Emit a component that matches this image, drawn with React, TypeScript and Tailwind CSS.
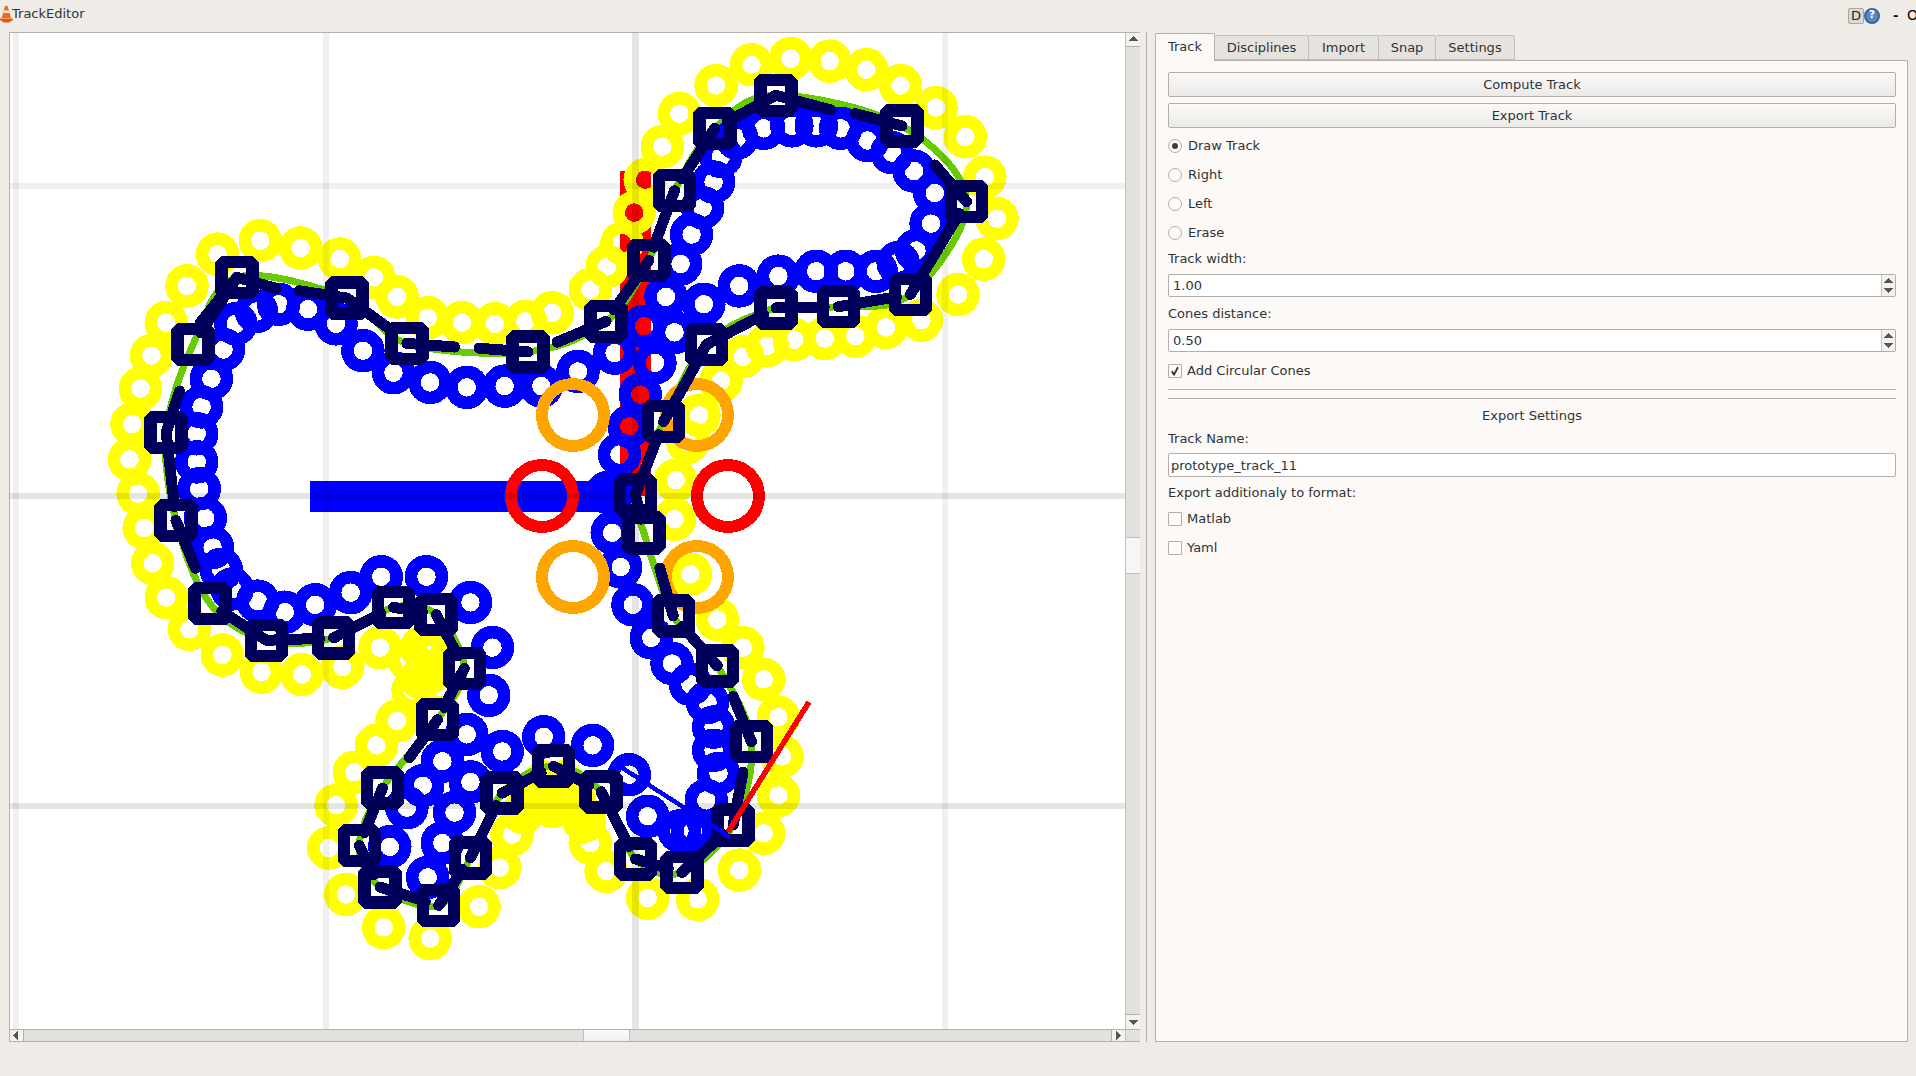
const S = 1916 / 1568;

type P = [number, number];

const GRID_X = [
  { x: 13, w: 6, o: 0.06 },
  { x: 323, w: 6, o: 0.06 },
  { x: 632, w: 7, o: 0.1 },
  { x: 942, w: 6, o: 0.06 },
];
const GRID_Y = [
  { y: 183, h: 6, o: 0.06 },
  { y: 493, h: 6, o: 0.1 },
  { y: 803, h: 6, o: 0.1 },
];

const YELLOW: P[] = [
  [586, 70], [615, 53], [647, 48], [679, 50], [709, 57], [737, 70], [766, 88], [790, 112], [806, 145], [816, 179],
  [805, 212], [784, 241], [754, 262], [725, 268], [700, 275], [675, 277], [650, 278], [628, 283], [608, 292], [590, 312],
  [572, 340], [563, 362], [553, 393], [552, 425], [565, 470], [587, 507], [608, 530], [625, 556], [637, 587], [640, 619],
  [637, 651], [625, 682], [605, 712], [571, 736], [530, 735], [496, 713], [483, 690], [478, 672], [470, 655], [455, 650],
  [440, 650], [428, 665], [419, 683], [409, 710], [392, 742], [352, 768], [314, 759], [283, 732], [269, 694], [275, 659],
  [290, 632], [308, 610], [325, 590], [338, 565], [352, 550], [345, 530], [311, 530], [280, 546], [247, 552], [214, 550],
  [182, 536], [155, 515], [136, 489], [125, 461], [118, 432], [113, 404], [106, 376], [108, 347], [115, 318], [124, 291],
  [136, 264], [153, 234], [178, 208], [213, 197], [246, 203], [278, 212], [306, 227], [325, 243], [350, 260], [378, 264],
  [405, 265], [430, 263], [452, 256], [483, 237], [497, 218], [509, 199], [519, 174], [528, 147], [542, 120], [556, 93],
  [335, 540], [355, 535], [345, 555], [360, 562], [445, 640], [460, 640], [472, 662], [435, 655], [452, 660],
];

const BLUE: P[] = [
  [584, 149], [590, 128], [603, 113], [625, 105], [648, 103], [668, 103], [688, 105], [710, 115], [730, 125], [748, 140],
  [765, 158], [762, 183], [750, 205], [735, 215], [717, 222], [692, 222], [668, 222], [637, 226], [605, 234], [576, 249],
  [552, 272], [536, 297], [527, 267], [524, 323], [515, 349], [507, 372], [497, 403], [501, 436], [508, 464], [518, 495],
  [533, 522], [550, 543], [565, 560], [579, 575], [584, 595], [584, 614], [588, 633], [578, 655], [567, 680], [556, 680],
  [530, 668], [515, 634], [485, 610], [445, 603], [411, 615], [382, 601], [362, 623], [346, 643], [385, 640], [372, 665],
  [333, 661], [319, 693], [362, 690], [350, 718], [400, 569], [403, 530], [385, 493], [349, 472], [312, 472], [287, 485],
  [258, 495], [233, 501], [211, 492], [190, 482], [181, 466], [174, 448], [168, 424], [163, 400], [161, 378], [161, 355], [165, 333],
  [173, 310], [183, 286], [193, 265], [210, 255], [228, 249], [252, 253], [275, 265], [297, 287], [322, 305], [352, 313], [382, 317],
  [413, 316], [443, 316], [473, 304], [503, 289], [545, 243], [557, 216], [566, 192], [575, 170],
];

const SQUARES: P[] = [
  [194, 227], [284, 244], [333, 281], [432, 288], [496, 263], [531, 213], [552, 156], [585, 105], [635, 78], [738, 103],
  [791, 165], [745, 241], [686, 251], [635, 252], [578, 282], [543, 345], [520, 405], [527, 436], [551, 504], [587, 545],
  [615, 607], [600, 675], [558, 714], [520, 703], [492, 648], [453, 627], [411, 649], [385, 702], [359, 741], [311, 726],
  [294, 692], [313, 645], [358, 589], [380, 547], [357, 503], [322, 497], [273, 522], [218, 524], [172, 494], [144, 426],
  [136, 354], [158, 282],
];

const HANDLES: [number, number, number, number][] = [
  [164, 264, 194, 227], [194, 227, 226, 236], [245, 238, 284, 244], [284, 244, 320, 270], [333, 281, 372, 284],
  [392, 285, 432, 288], [456, 280, 496, 263], [496, 263, 531, 213], [531, 213, 552, 156], [552, 156, 585, 105],
  [585, 105, 635, 78], [635, 78, 680, 90], [700, 93, 738, 103], [765, 135, 791, 165], [791, 165, 745, 241],
  [745, 241, 686, 251], [686, 251, 635, 252], [635, 252, 578, 282], [578, 282, 563, 310], [543, 345, 563, 310],
  [543, 345, 520, 405], [527, 436, 520, 405], [540, 465, 551, 504], [551, 504, 587, 545], [600, 570, 615, 607],
  [608, 632, 600, 675], [600, 675, 558, 714], [558, 714, 520, 703], [520, 703, 492, 648], [492, 648, 453, 627],
  [453, 627, 411, 649], [411, 649, 385, 702], [385, 702, 359, 741], [359, 741, 311, 726], [311, 726, 294, 692],
  [294, 692, 313, 645], [335, 620, 358, 589], [358, 589, 380, 547], [380, 547, 357, 503], [357, 503, 322, 497],
  [322, 497, 273, 522], [273, 522, 218, 524], [172, 494, 218, 524], [160, 465, 144, 426], [144, 426, 136, 354],
  [136, 354, 147, 320], [158, 282, 194, 227],
];

const isSquare = (x: number, y: number) => SQUARES.some((s) => s[0] === x && s[1] === y);

// handles between two squares only reach the middle of the far one
function handleEnds([a, b, c, d]: [number, number, number, number]) {
  let x1 = a * S;
  let y1 = b * S;
  if (isSquare(a, b) && isSquare(c, d)) {
    const len = Math.hypot(c - a, d - b) * S;
    x1 += ((c - a) * S * 14) / len;
    y1 += ((d - b) * S * 14) / len;
  }
  return { x1, y1, x2: c * S, y2: d * S };
}

// closed catmull-rom through the control squares
function trackPath(pts: P[]) {
  const n = pts.length;
  let d = `M${pts[0][0] * S} ${pts[0][1] * S}`;
  for (let i = 0; i < n; i++) {
    const p0 = pts[(i - 1 + n) % n];
    const p1 = pts[i];
    const p2 = pts[(i + 1) % n];
    const p3 = pts[(i + 2) % n];
    const c1x = (p1[0] + (p2[0] - p0[0]) / 6) * S;
    const c1y = (p1[1] + (p2[1] - p0[1]) / 6) * S;
    const c2x = (p2[0] - (p3[0] - p1[0]) / 6) * S;
    const c2y = (p2[1] - (p3[1] - p1[1]) / 6) * S;
    d += ` C${c1x} ${c1y} ${c2x} ${c2y} ${p2[0] * S} ${p2[1] * S}`;
  }
  return d + "Z";
}

function TrackCanvas() {
  return (
    <svg viewBox="10 33 1115 996" shapeRendering="crispEdges" className="block w-full h-full">
      <rect x={620} y={171} width={31} height={325} fill="#ff0000" />
      <rect x={310} y={481} width={330} height={31} fill="#0000ff" />
      {YELLOW.map(([x, y], i) => (
        <circle key={i} cx={x * S} cy={y * S} r={15.5} fill="none" stroke="#ffff00" strokeWidth={12.5} />
      ))}
      <path d={trackPath(SQUARES)} fill="none" stroke="#66cc00" strokeWidth={7} />
      {BLUE.map(([x, y], i) => (
        <circle key={i} cx={x * S} cy={y * S} r={15.5} fill="none" stroke="#0000ff" strokeWidth={12.5} />
      ))}
      <circle cx={573} cy={415} r={31} fill="none" stroke="#ffa500" strokeWidth={12} />
      <circle cx={697} cy={415} r={31} fill="none" stroke="#ffa500" strokeWidth={12} />
      <circle cx={573} cy={577} r={31} fill="none" stroke="#ffa500" strokeWidth={12} />
      <circle cx={697} cy={577} r={31} fill="none" stroke="#ffa500" strokeWidth={12} />
      <circle cx={542} cy={496} r={31} fill="none" stroke="#ff0000" strokeWidth={12} />
      <circle cx={728} cy={496} r={31} fill="none" stroke="#ff0000" strokeWidth={12} />
      {HANDLES.map((h, i) => (
        <line key={i} {...handleEnds(h)} stroke="#00005a" strokeWidth={11} strokeLinecap="round" />
      ))}
      {SQUARES.map(([x, y], i) => (
        <rect
          key={i}
          x={x * S - 15.5}
          y={y * S - 15.5}
          width={31}
          height={31}
          fill="none"
          stroke="#00005a"
          strokeWidth={12.5}
          strokeLinejoin="bevel"
        />
      ))}
      <line x1={613} y1={762} x2={730} y2={837} stroke="#0000ff" strokeWidth={4.5} />
      <line x1={728} y1={832} x2={809} y2={702} stroke="#ff0000" strokeWidth={5.5} />
      {GRID_X.map((g) => (
        <rect key={g.x} x={g.x} y={33} width={g.w} height={996} fill="#000000" fillOpacity={g.o} />
      ))}
      {GRID_Y.map((g) => (
        <rect key={g.y} x={10} y={g.y} width={1115} height={g.h} fill="#000000" fillOpacity={g.o} />
      ))}
    </svg>
  );
}

function Arrow({ dir }: { dir: "up" | "down" | "left" | "right" }) {
  const pts = { up: "0,6 9,6 4.5,1", down: "0,2 9,2 4.5,7", left: "6,0 6,9 1,4.5", right: "2,0 2,9 7,4.5" }[dir];
  return (
    <svg width={9} height={9} viewBox="0 0 9 9" shapeRendering="crispEdges">
      <polygon points={pts} fill="#555753" />
    </svg>
  );
}

function ScrollButton({ dir, className }: { dir: "up" | "down" | "left" | "right"; className: string }) {
  return (
    <div className={`flex items-center justify-center bg-[#f4f2ef] border-[#b5b0ab] ${className}`}>
      <Arrow dir={dir} />
    </div>
  );
}

function ConeIcon() {
  return (
    <svg width={13} height={17} viewBox="0 0 13 17" className="shrink-0">
      <path d="M5 0h2.6l3.4 12H1.6z" fill="#f26a12" />
      <path d="M3.9 4.5h4.8l.6 2.4H3.2z" fill="#f7efe6" />
      <path d="M0 12.5h12.6L13 14l-4 2.6H4L0 14z" fill="#e8560c" />
    </svg>
  );
}

function Radio({ label, checked }: { label: string; checked?: boolean }) {
  return (
    <div className="flex items-center h-[29px] gap-[6px]">
      <span className="flex items-center justify-center w-[14px] h-[14px] rounded-full border border-[#b3aeaa] bg-[#fdfcfb]">
        {checked && <span className="w-[6px] h-[6px] rounded-full bg-[#3b3f40]" />}
      </span>
      <span>{label}</span>
    </div>
  );
}

function Check({ label, checked }: { label: string; checked?: boolean }) {
  return (
    <div className="flex items-center h-full gap-[5px]">
      <span className="flex items-center justify-center w-[14px] h-[14px] border border-[#b3aeaa] bg-[#fdfcfb] rounded-[1px]">
        {checked && (
          <svg width={10} height={10} viewBox="0 0 10 10">
            <path d="M1.8 5.2 4 8.6 8 1.2" fill="none" stroke="#2e3436" strokeWidth={1.8} />
          </svg>
        )}
      </span>
      <span>{label}</span>
    </div>
  );
}

function PushButton({ label, className = "" }: { label: string; className?: string }) {
  return (
    <div
      className={`flex items-center justify-center h-[25px] rounded-[2px] border border-[#b3aeaa] bg-gradient-to-b from-[#fafafa] to-[#eceae7] ${className}`}
    >
      {label}
    </div>
  );
}

function SpinBox({ value, className = "" }: { value: string; className?: string }) {
  return (
    <div className={`flex h-[23px] rounded-[2px] border border-[#b3aeaa] bg-white ${className}`}>
      <div className="flex-1 flex items-center pl-[4px] pt-[1px]">{value}</div>
      <div className="w-[14px] flex flex-col items-center justify-center border-l border-[#c8c4c0] bg-[#f4f2ef]">
        <Arrow dir="up" />
        <Arrow dir="down" />
      </div>
    </div>
  );
}

const TABS = [
  { label: "Disciplines", w: "w-[94px]" },
  { label: "Import", w: "w-[70px]" },
  { label: "Snap", w: "w-[57px]" },
  { label: "Settings", w: "w-[79px]" },
];

export default function App() {
  return (
    <div className="w-[1916px] h-[1076px] overflow-hidden flex flex-col bg-[#efebe7] text-[#2e3436] text-[13px] font-['DejaVu_Sans',sans-serif]">
      <div className="h-[32px] flex items-start pt-[6px]">
        <ConeIcon />
        <span className="-ml-[1px] leading-[16px]">TrackEditor</span>
        <div className="ml-auto flex items-center -mt-[1px]">
          <div className="w-[16px] h-[16px] flex items-center justify-center rounded-[2px] border border-[#a9a5a1] bg-[#dcd9d5] text-[#222] text-[13px]">
            D
          </div>
          <div className="w-[16px] h-[16px] flex items-center justify-center rounded-full border-2 border-[#3465a4] bg-[#5c86bd] text-white text-[11px] font-bold">
            ?
          </div>
          <span className="ml-[13px] w-[14px] font-bold text-black">-</span>
          <span className="w-[9px] overflow-hidden text-black text-[14px]">O</span>
        </div>
      </div>

      <div className="flex h-[1010px] pl-[9px]">
        <div className="w-[1131px] h-[1010px] flex flex-col border-l border-[#b5b0ab] border-t border-b-0">
          <div className="flex h-[996px]">
            <div className="w-[1115px] h-[996px] bg-white overflow-hidden">
              <TrackCanvas />
            </div>
            <div className="w-[15px] flex flex-col bg-[#e3e1dd] border-l border-[#c2beb9]">
              <ScrollButton dir="up" className="h-[14px] border-b" />
              <div className="h-[490px]" />
              <div className="h-[37px] bg-[#f7f6f4] border-y border-[#c2beb9]" />
              <div className="flex-1" />
              <ScrollButton dir="down" className="h-[15px] border-t" />
            </div>
          </div>
          <div className="flex h-[14px] bg-[#e3e1dd] border-y border-[#b5b0ab]">
            <ScrollButton dir="left" className="w-[14px] border-r" />
            <div className="w-[559px]" />
            <div className="w-[47px] bg-gradient-to-b from-[#fbfaf9] to-[#f1efec] border-x border-[#c2beb9]" />
            <div className="flex-1" />
            <ScrollButton dir="right" className="w-[14px] border-l" />
            <div className="w-[15px] bg-[#e3e1dd] border-l border-[#c2beb9]" />
          </div>
        </div>

        <div className="w-[15px] flex pl-[6px] h-[1010px]">
          <div className="w-[1px] h-full bg-[#b5b0ab]" />
        </div>

        <div className="w-[753px] h-[1010px] flex flex-col">
          <div className="flex items-end h-[28px] relative z-10">
            <div className="w-[60px] h-[28px] -mb-[1px] flex items-center justify-center pb-[2px] bg-[#fdf9f6] border border-b-0 border-[#b5b0ab] rounded-t-[2px]">
              Track
            </div>
            {TABS.map((t) => (
              <div
                key={t.label}
                className={`${t.w} h-[25px] flex items-center justify-center bg-[#e6e3df] border border-l-0 border-[#c2beb9] rounded-t-[2px]`}
              >
                {t.label}
              </div>
            ))}
          </div>
          <div className="w-[753px] h-[982px] bg-[#fdf9f6] border border-[#b5b0ab] pl-[12px] pr-[11px] pt-[11px] flex flex-col">
            <PushButton label="Compute Track" />
            <PushButton label="Export Track" className="mt-[6px]" />
            <div className="mt-[3px]">
              <Radio label="Draw Track" checked />
              <Radio label="Right" />
              <Radio label="Left" />
              <Radio label="Erase" />
            </div>
            <div className="h-[22px] mt-[1px] flex items-center">Track width:</div>
            <SpinBox value="1.00" className="mt-[4px]" />
            <div className="h-[22px] mt-[6px] flex items-center">Cones distance:</div>
            <SpinBox value="0.50" className="mt-[4px]" />
            <div className="h-[24px] mt-[7px]">
              <Check label="Add Circular Cones" checked />
            </div>
            <div className="h-[1px] mt-[6px] bg-[#b5b0ab]" />
            <div className="h-[1px] mt-[8px] bg-[#b5b0ab]" />
            <div className="h-[24px] mt-[5px] flex items-center justify-center">Export Settings</div>
            <div className="h-[20px] pt-[1px] flex items-center">Track Name:</div>
            <div className="h-[24px] mt-[5px] flex items-center pl-[2px] pt-[1px] rounded-[2px] border border-[#b3aeaa] bg-white">
              prototype_track_11
            </div>
            <div className="h-[20px] mt-[6px] flex items-center">Export additionaly to format:</div>
            <div className="h-[29px] mt-[1px]">
              <Check label="Matlab" />
            </div>
            <div className="h-[29px]">
              <Check label="Yaml" />
            </div>
          </div>
        </div>
      </div>
    </div>
  );
}
